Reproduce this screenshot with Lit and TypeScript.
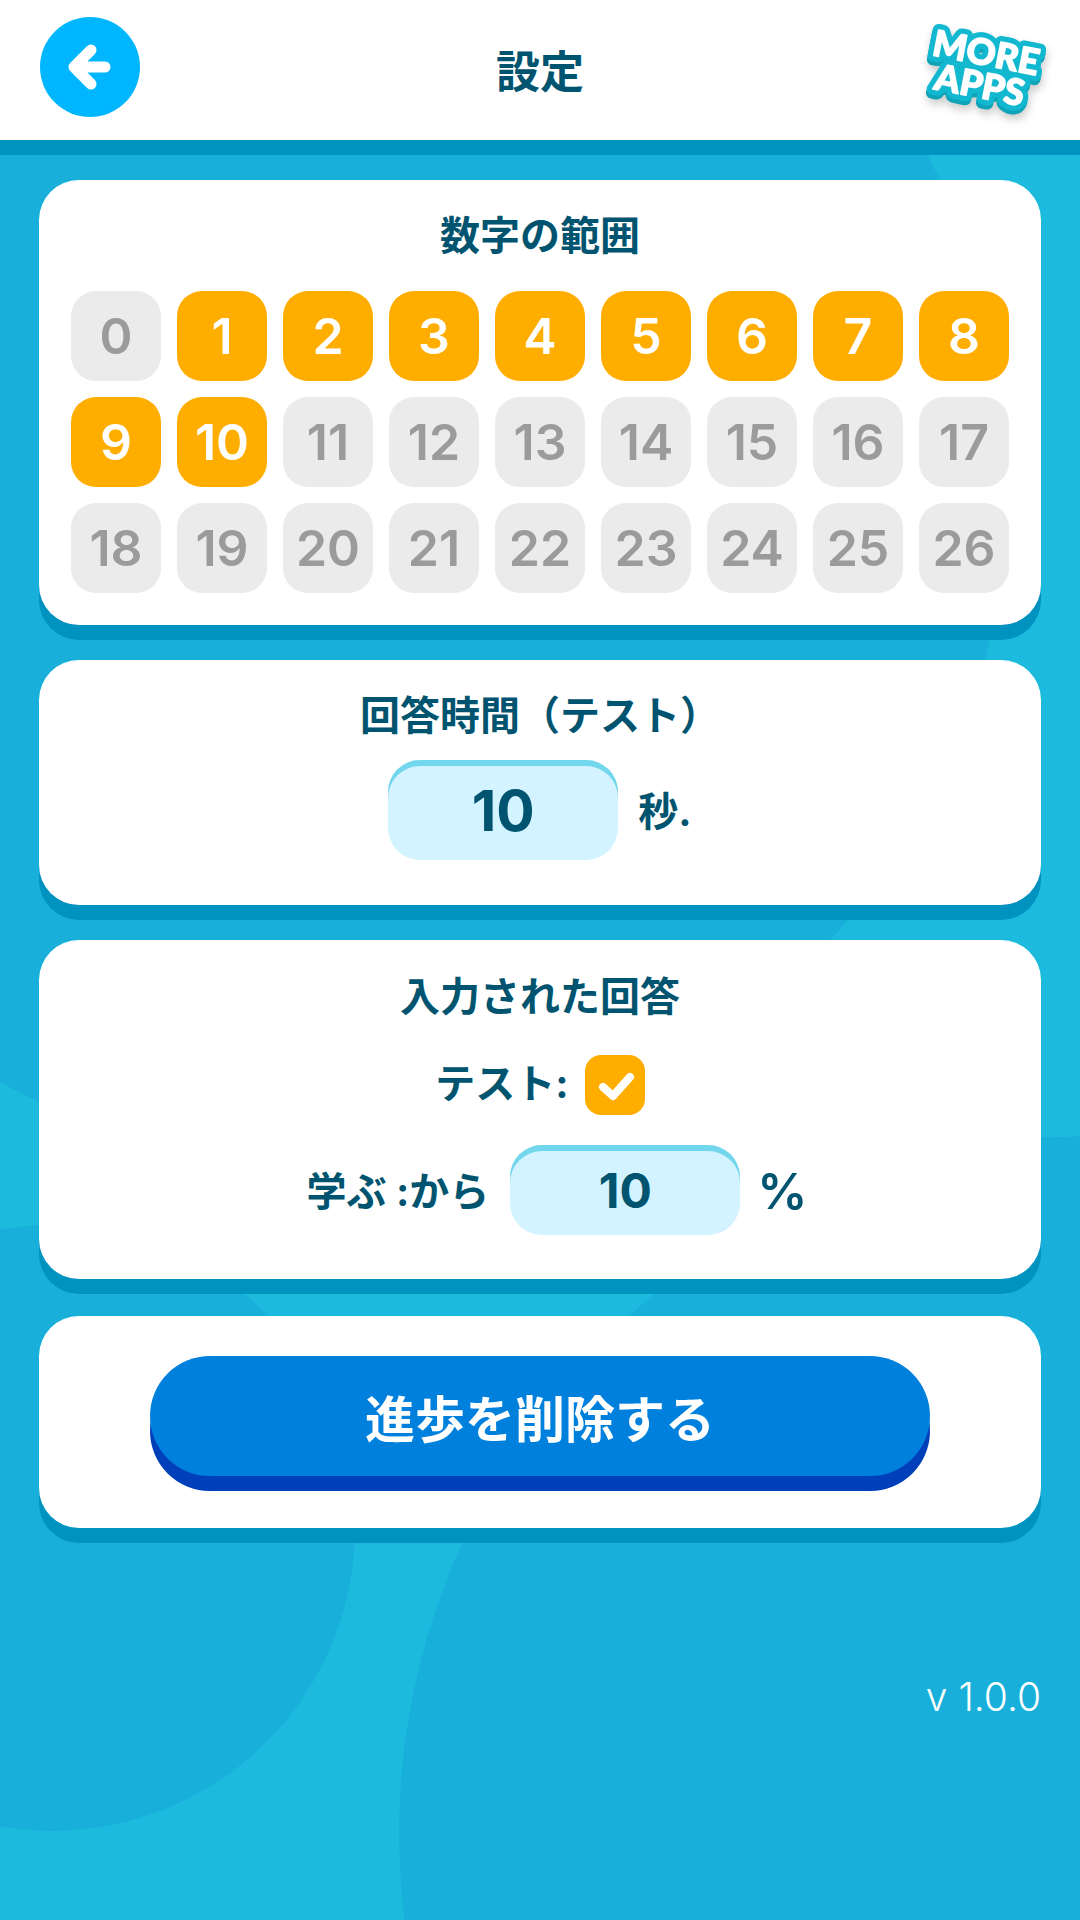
import { css, html, LitElement, svg } from "lit";
import { customElement } from "lit/decorators.js";

const SELECTED_MAX = 10;

@customElement("app-root")
export class AppRoot extends LitElement {
  static styles = css`
    :host {
      display: block;
      position: relative;
      height: 1920px;
      overflow: hidden;
      background: #1cbbde;
      color: #00546f;
      font-family: Inter, "Noto Sans CJK JP", sans-serif;
      font-weight: 700;
    }

    .bg {
      position: absolute;
      inset: 0;
      width: 1080px;
      height: 1920px;
    }

    .bg circle {
      fill: #18b0da;
    }

    header {
      position: relative;
      box-sizing: border-box;
      height: 155px;
      padding: 0 33px 0 40px;
      display: flex;
      align-items: center;
      justify-content: space-between;
      background: #fff;
      border-bottom: 15px solid #0093bf;
    }

    .back {
      width: 100px;
      height: 100px;
      margin-top: -6px;
      border-radius: 50%;
      background: #00b6ff;
    }

    .back svg {
      display: block;
    }

    h1 {
      position: absolute;
      left: 0;
      right: 0;
      top: 44px;
      margin: 0;
      font-size: 44px;
      line-height: 56px;
      font-weight: 700;
      text-align: center;
    }

    .more {
      display: block;
      margin-top: 8px;
      filter: drop-shadow(1px 5px 4px rgba(0, 0, 0, 0.2));
    }

    .more text {
      font-family: Lato, sans-serif;
      font-size: 36px;
      font-weight: 900;
      text-anchor: middle;
      stroke-linejoin: round;
    }

    .more .depth {
      fill: #0fa3b8;
      stroke: #0fa3b8;
      stroke-width: 12px;
    }

    .more .edge {
      fill: #12b8d0;
      stroke: #12b8d0;
      stroke-width: 12px;
    }

    .more .face {
      fill: #fff;
      stroke: #fff;
      stroke-width: 1.5px;
    }

    main {
      position: relative;
      padding: 25px 39px 0;
      display: flex;
      flex-direction: column;
      gap: 35px;
    }

    .card {
      background: #fff;
      border-radius: 40px;
      box-shadow: 0 15px 0 #0093bf;
    }

    h2 {
      margin: 0;
      font-size: 40px;
      line-height: 50px;
      font-weight: 700;
      text-align: center;
    }

    .range {
      padding: 31px 32px 32px;
    }

    .grid {
      margin-top: 30px;
      display: grid;
      grid-template-columns: repeat(9, 90px);
      gap: 16px;
    }

    .tile {
      height: 90px;
      border-radius: 25px;
      display: flex;
      align-items: center;
      justify-content: center;
      background: #ebebeb;
      color: #9b9b9b;
      font-size: 50px;
      font-weight: 600;
    }

    .tile.on {
      background: #ffae00;
      color: #fff;
    }

    .time {
      padding: 31px 0 45px;
    }

    .row {
      display: flex;
      align-items: center;
      justify-content: center;
      font-size: 40px;
      line-height: 50px;
    }

    .time .row {
      margin-top: 19px;
      gap: 20px;
    }

    .time .label {
      padding-top: 3px;
    }

    .input {
      box-sizing: border-box;
      width: 230px;
      padding-top: 2px;
      display: flex;
      align-items: center;
      justify-content: center;
      background: #d2f3ff;
      border-radius: 32px;
      box-shadow: inset 0 6px 0 #72d6ec;
    }

    .time .input {
      height: 100px;
      font-size: 57px;
    }

    .answers {
      height: 339px;
      box-sizing: border-box;
      padding-top: 32px;
    }

    .test {
      margin-top: 33px;
      gap: 16px;
    }

    .test .label {
      padding-bottom: 2px;
    }

    .check {
      width: 60px;
      height: 60px;
      border-radius: 16px;
      background: #ffae00;
    }

    .check svg {
      display: block;
    }

    .learn {
      margin-top: 30px;
      padding-left: 34px;
    }

    .learn .label {
      padding-top: 4px;
    }

    .learn .input {
      height: 90px;
      margin: 0 17px 0 21px;
      font-size: 48px;
    }

    .percent {
      padding-top: 2px;
      font-size: 50px;
      font-weight: 600;
    }

    .reset {
      margin-top: 2px;
      padding: 40px 0 52px;
      display: flex;
      justify-content: center;
    }

    .reset button {
      width: 780px;
      height: 120px;
      border: 0;
      border-radius: 60px;
      background: #0080dd;
      box-shadow: 0 15px 0 #003fba;
      color: #fff;
      font: inherit;
      font-size: 50px;
      font-weight: 700;
    }

    .version {
      position: relative;
      margin: 146px 39px 0 0;
      text-align: right;
      color: #fff;
      font-size: 39px;
      line-height: 46px;
      font-weight: 300;
    }
  `;

  private moreLabel(cls: string, dy = 0) {
    return svg`
      <text class=${cls} x="65" y=${46 + dy}>MORE</text>
      <text class=${cls} x="65" y=${79 + dy}>APPS</text>
    `;
  }

  protected override render() {
    const tiles = Array.from({ length: 27 }, (_, n) => n);
    return html`
      <svg class="bg" viewBox="0 0 1080 1920" aria-hidden="true">
        <circle cx="324" cy="479" r="685"></circle>
        <circle cx="52" cy="1528" r="303"></circle>
        <circle cx="1096" cy="1833" r="697"></circle>
      </svg>

      <header>
        <div class="back">
          <svg width="100" height="100" viewBox="0 0 100 100" fill="none" stroke="#fff" stroke-width="11" stroke-linecap="round" stroke-linejoin="round">
            <path d="M51 33 34 50l17 17M36 50h29"></path>
          </svg>
        </div>
        <h1>設定</h1>
        <svg class="more" width="130" height="110" viewBox="0 0 130 110">
          <g transform="rotate(11 65 55)">
            ${this.moreLabel("depth", 4)} ${this.moreLabel("edge")} ${this.moreLabel("face")}
          </g>
        </svg>
      </header>

      <main>
        <section class="card range">
          <h2>数字の範囲</h2>
          <div class="grid">
            ${tiles.map(
              (n) => html`<div class="tile ${n >= 1 && n <= SELECTED_MAX ? "on" : ""}">${n}</div>`
            )}
          </div>
        </section>

        <section class="card time">
          <h2>回答時間（テスト）</h2>
          <div class="row">
            <div class="input">10</div>
            <span class="label">秒.</span>
          </div>
        </section>

        <section class="card answers">
          <h2>入力された回答</h2>
          <div class="row test">
            <span class="label">テスト:</span>
            <div class="check">
              <svg width="60" height="60" viewBox="0 0 60 60" fill="none" stroke="#fff" stroke-width="8" stroke-linecap="round" stroke-linejoin="round">
                <path d="M18 32l10 9 17-19"></path>
              </svg>
            </div>
          </div>
          <div class="row learn">
            <span class="label">学ぶ :から</span>
            <div class="input">10</div>
            <span class="percent">%</span>
          </div>
        </section>

        <section class="card reset">
          <button>進歩を削除する</button>
        </section>
      </main>

      <div class="version">v 1.0.0</div>
    `;
  }
}
